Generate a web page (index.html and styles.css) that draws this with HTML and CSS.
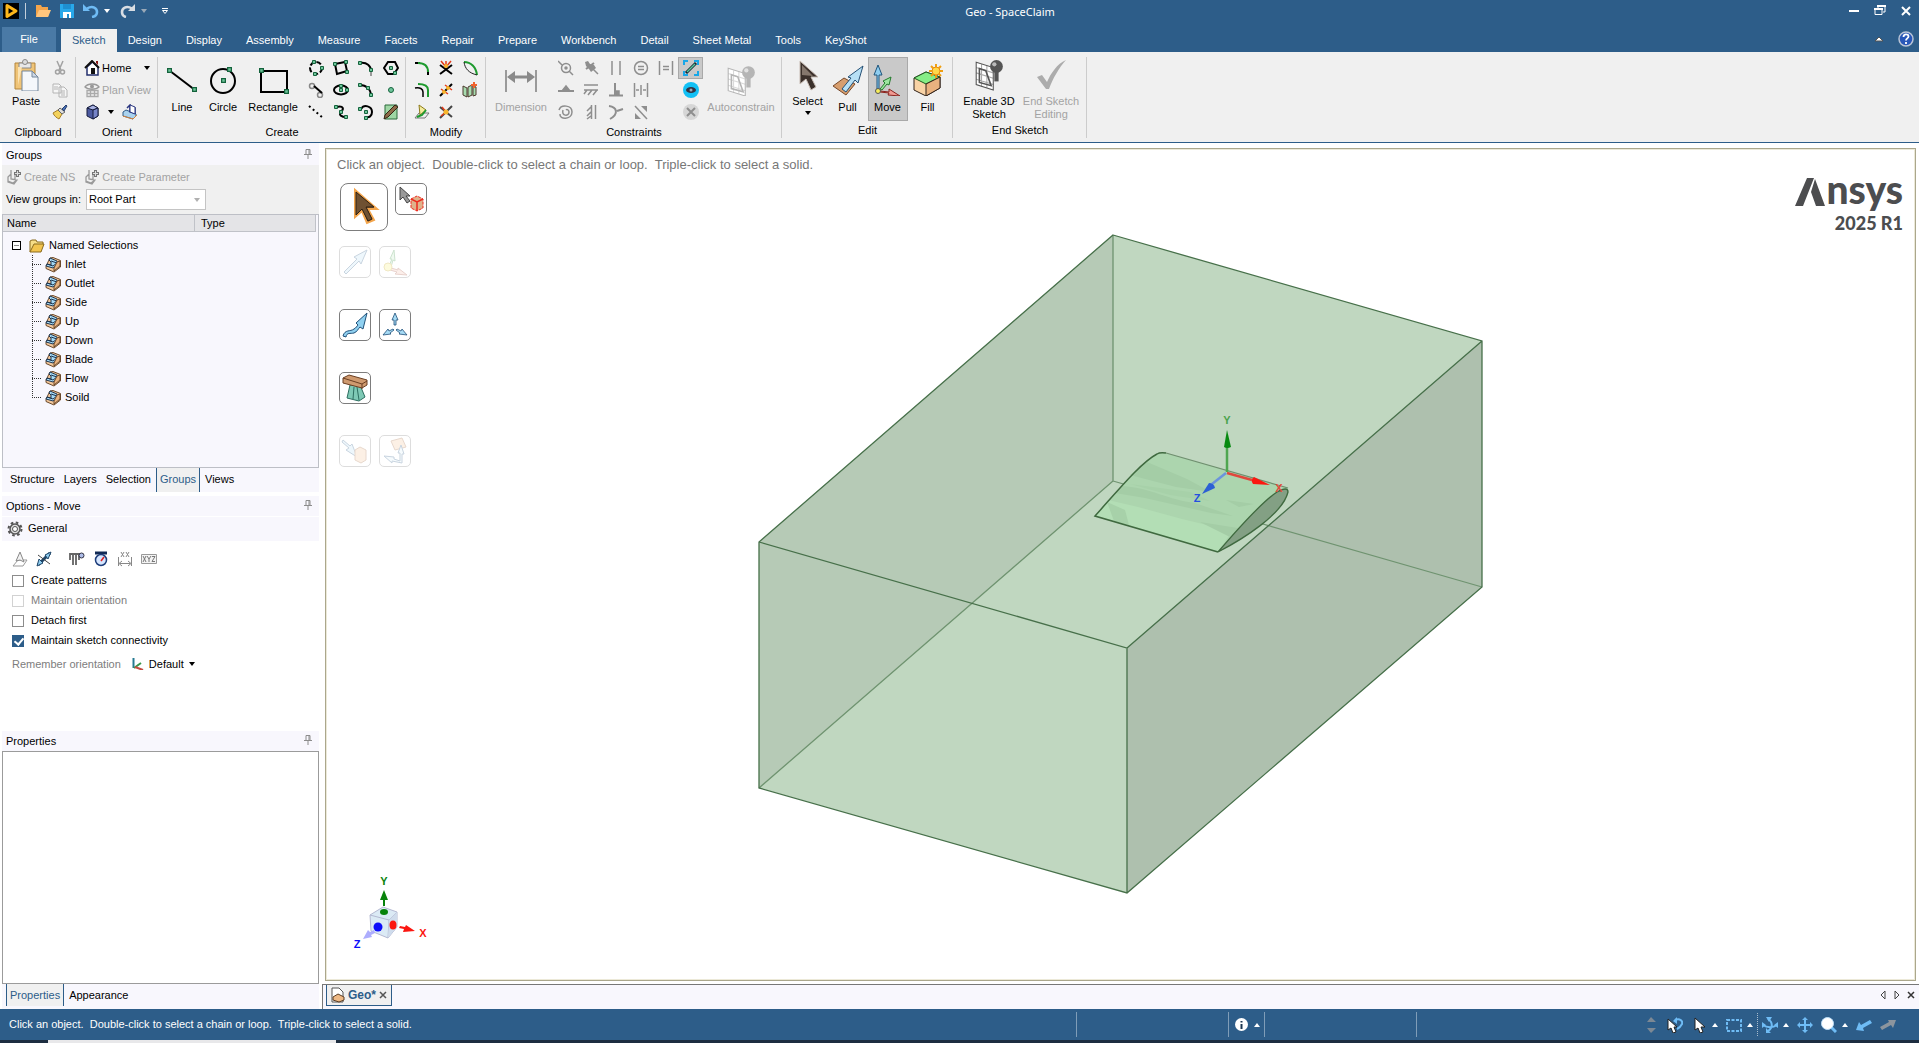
FILE: index.html
```html
<!DOCTYPE html>
<html lang="en">
<head>
<meta charset="utf-8">
<title>Geo - SpaceClaim</title>
<meta name="viewport" content="width=device-width, initial-scale=1">
<link rel="stylesheet" href="styles.css">
</head>
<body>
<svg class="defs" aria-hidden="true">
  <symbol id="down" viewBox="0 0 6 6"><path d="M0 1h6L3 5z" fill="currentColor"/></symbol>
  <symbol id="up" viewBox="0 0 6 6"><path d="M0 5h6L3 1z" fill="currentColor"/></symbol>
  <symbol id="pin" viewBox="0 0 8 10"><path d="M2 .5h4v5H2zM0 5.500h8M4 6v4M5 1v4" fill="none" stroke="#8c8c8c"/></symbol>
  <symbol id="h" viewBox="0 0 4 4"><path d="M.5 .5h3v3h-3z" fill="#6fc59b" stroke="#14633c"/></symbol>
  <symbol id="face" viewBox="0 0 16 16"><path d="M1 9l4-8 3-.5 7.500 3v6.500L9 15 1 11.500z" fill="#f4c79a" stroke="#6b4a2c"/><path d="M5 1l7 3v4l-4 3-7-2 1-2 4 1V5L4 3z" fill="#a6daf5" stroke="#1d3550"/><path d="M6 4l6 2M2 7l6 2 4-3" fill="none" stroke="#1d3550"/><path d="M12 5l3-1v5l-6 5v-3z" fill="#e9b27f" stroke="#6b4a2c"/></symbol>
  <symbol id="ns" viewBox="0 0 16 16"><path d="M2 8l3-3v5l6 1-3 4-6-2zM5 1v6M9 5v6M2 12l5 2 4-3" fill="none" stroke="#9a9a9a" stroke-width="1.300"/><path d="M11.500 1v7M8 4.500h7" stroke="#777" stroke-width="3"/><path d="M11.500 2v5M9 4.500h5" stroke="#ddd"/></symbol>
  <symbol id="bulb" viewBox="0 0 28 30"><path d="M2 3l16 5v21L2 24z" fill="#fff" stroke="currentColor"/><path d="M2 8l16 5M2 13l16 5M2 19l16 5M7 5v21M12 6v21" stroke="currentColor" opacity=".5"/><path d="M5 9l6 2 5 14-11-3z" fill="none" stroke="currentColor" stroke-width="1.500"/><circle cx="21" cy="7" r="6" fill="currentColor"/><circle cx="19" cy="5" r="2" fill="#fff" opacity=".6"/><path d="M19 12h4v9h-4z" fill="currentColor"/></symbol>
</svg>

<header class="top">
  <div class="titlebar">
    <div class="quick">
      <svg class="q-logo" width="16" height="16" viewBox="0 0 16 16"><path fill="#000" d="M0 0h16v16H0z"/><path d="M4 2.500L13 8l-9 5.500z" fill="none" stroke="#fdb71a" stroke-width="3" stroke-linejoin="round"/></svg>
      <span class="q-sep"></span>
      <button aria-label="Open"><svg width="16" height="14" viewBox="0 0 16 14"><path d="M1 13V1h5l1 2h6v3h2l-2 7z" fill="#f3a54c"/><path d="M4 6h12l-3 7H1z" fill="#ffc57d"/></svg></button>
      <button aria-label="Save"><svg width="14" height="14" viewBox="0 0 14 14"><path d="M0 0h14v14H0z" fill="#28a8ea"/><path d="M3 8h8v6H3z" fill="#fff"/><path d="M7 10h2v4H7zM3 0h8v5H3z" fill="#1e8fd0"/></svg></button>
      <button aria-label="Undo"><svg width="16" height="14" viewBox="0 0 16 14"><path d="M4 4.500c6-3.500 10 0 10 3.500 0 3-2 4.500-5 5" fill="none" stroke="#6fbcf5" stroke-width="2.600"/><path d="M0 7V0l7 7z" fill="#6fbcf5"/></svg></button>
      <svg class="tri" width="6" height="6"><use href="#down"/></svg>
      <button aria-label="Redo"><svg width="16" height="14" viewBox="0 0 16 14"><path d="M12 4.500c-6-3.500-10 0-10 3.500 0 3 2 4.500 4 5" fill="none" stroke="#d8dde3" stroke-width="2.600"/><path d="M15 7V0L8 7z" fill="#d8dde3"/></svg></button>
      <svg class="tri dim" width="6" height="6"><use href="#down"/></svg>
      <button class="customize" aria-label="Customize"><svg width="6" height="7" viewBox="0 0 6 7"><path d="M0 .5h6" stroke="#fff"/><path d="M.5 2.500h5L3 5.500z" fill="none" stroke="#fff"/></svg></button>
    </div>
    <h1>Geo - SpaceClaim</h1>
    <div class="window">
      <button aria-label="Minimize"><svg width="12" height="12"><path d="M1 6h10" stroke="#fff" stroke-width="2"/></svg></button>
      <button aria-label="Restore"><svg width="12" height="12"><path d="M4 4V1h7v6H9" fill="none" stroke="#fff"/><path d="M1 4.500h7v5H1z" fill="none" stroke="#fff"/><path d="M0 4h9M3 1h9" stroke="#fff" stroke-width="2"/></svg></button>
      <button aria-label="Close"><svg width="12" height="12"><path d="M2 2l8 8M10 2l-8 8" stroke="#fff" stroke-width="2"/></svg></button>
    </div>
  </div>
  <nav class="tabs">
    <button class="file">File</button>
    <button class="on">Sketch</button>
    <button>Design</button><button>Display</button><button>Assembly</button><button>Measure</button><button>Facets</button><button>Repair</button><button>Prepare</button><button>Workbench</button><button>Detail</button><button>Sheet Metal</button><button>Tools</button><button>KeyShot</button>
    <span class="grow"></span>
    <button class="plain" aria-label="Collapse ribbon"><svg width="10" height="6"><path d="M1 5l4-4 4 4z" fill="#fff" stroke="#555"/></svg></button>
    <button class="plain help" aria-label="Help"><svg width="16" height="16"><circle cx="8" cy="8" r="7" fill="#2857b8" stroke="#b9c4d6" stroke-width="1.500"/><path d="M5.500 6c0-3.500 5-3.500 5-.5 0 2-2.500 1.800-2.500 4M8 11v2" fill="none" stroke="#fff" stroke-width="1.800"/></svg></button>
  </nav>
</header>

<section class="ribbon" aria-label="Sketch tools">
  <div class="group clipboard">
    <div class="body">
      <button class="big high"><svg width="32" height="32" viewBox="0 0 32 32"><path d="M5 4h20v26H5z" fill="#f0c477" stroke="#b3853c"/><path d="M9 4h12v5H9z" fill="#e8e8e8" stroke="#888"/><circle cx="15" cy="3" r="2.500" fill="#ddd" stroke="#888"/><path d="M8 8h4l-4 18z" fill="#fbe3b3"/><path d="M12 12h10l6 6v14H12z" fill="#f4f7fb" stroke="#75879c"/><path d="M22 12v6h6z" fill="#cfd9e6" stroke="#75879c"/></svg>Paste</button>
      <div class="icons c1">
        <button aria-label="Cut"><svg width="16" height="16"><path d="M5 1l4 9M11 1L7 10" stroke="#a2a2a2" stroke-width="1.500"/><circle cx="5.500" cy="12" r="2" fill="none" stroke="#a2a2a2" stroke-width="1.500"/><circle cx="10.500" cy="12" r="2" fill="none" stroke="#a2a2a2" stroke-width="1.500"/></svg></button>
        <button aria-label="Copy"><svg width="16" height="16"><path d="M1 2h6l2 2v7H1zM7 5h5l3 3v7H7zM2 5h4M2 7h4M9 9h4M9 11h4M9 13h4" fill="#f6f6f6" stroke="#b4b4b4"/></svg></button>
        <button aria-label="Format painter"><svg width="16" height="16"><path d="M1 9l5-3 4 4-3 5c-2-1-5-3-6-6z" fill="#f3d25c" stroke="#a67d27"/><path d="M6 6l2-2 5 4-3 2z" fill="#ddd" stroke="#666"/><path d="M10 5l4-4 1 1-3 5z" fill="#476fb5" stroke="#28406e"/></svg></button>
      </div>
    </div>
    <h2>Clipboard</h2>
  </div>
  <div class="group orient">
    <div class="body rows">
      <div class="row"><button class="inline"><svg width="16" height="16"><path d="M3 7v8h11V7L8.500 2z" fill="#fff" stroke="#24306e" stroke-width="1.500"/><path d="M1 8l7-7 7 7" fill="none" stroke="#111" stroke-width="2"/><path d="M12 1h2v4l-2-2z" fill="#8a1a1a"/><path d="M7 8h4v6H7z" fill="#111"/></svg>Home</button><svg class="tri dark far" width="6" height="6"><use href="#down"/></svg></div>
      <div class="row"><button class="inline off"><svg width="16" height="16"><path d="M1 5c3-4 11-4 14 0-3 3-11 3-14 0z" fill="none" stroke="#999" stroke-width="1.300"/><circle cx="8" cy="4.500" r="2" fill="#999"/><path d="M3 8.500h11v6H3zM3 11.500h11M6.500 8v7M10.500 8v7" fill="none" stroke="#aaa" stroke-width="1.300"/></svg>Plan View</button></div>
      <div class="row"><button class="inline" aria-label="View cube"><svg width="16" height="16"><path d="M3 4l6-3 5 3v8l-5 3-6-3z" fill="#4c5aa0" stroke="#161c3d"/><path d="M3 4l6-3 5 3-5 2z" fill="#a8b2e2" stroke="#161c3d"/><path d="M9 6l5-2v8l-5 3z" fill="#7684c8" stroke="#161c3d"/></svg></button><svg class="tri dark" width="6" height="6"><use href="#down"/></svg><button class="inline spin" aria-label="Previous view"><svg width="16" height="16"><path d="M1 8l3-2 10 4v2l-3 3-10-3z" fill="#a9d2ee" stroke="#2c5a86"/><path d="M1 12l10 3 4-4" fill="none" stroke="#d8833a"/><path d="M5 4l3-3v7l5 1V4h-3" fill="none" stroke="#2b3780" stroke-width="1.500"/><path d="M8 1l5 2v7l-5-2z" fill="#fff" stroke="#2b3780"/></svg></button></div>
    </div>
    <h2>Orient</h2>
  </div>
  <div class="group create">
    <div class="body">
      <button class="big line"><svg width="32" height="32" viewBox="0 0 32 32"><path d="M4 7l25 19" stroke="#000" stroke-width="2"/><use href="#h" x="1" y="4" width="5" height="5"/><use href="#h" x="26" y="23" width="5" height="5"/></svg>Line</button>
      <button class="big"><svg width="32" height="32" viewBox="0 0 32 32"><circle cx="16" cy="17" r="12" fill="none" stroke="#000" stroke-width="2"/><use href="#h" x="14" y="14" width="5" height="5"/><use href="#h" x="20" y="3" width="5" height="5"/></svg>Circle</button>
      <button class="big rect"><svg width="32" height="32" viewBox="0 0 32 32"><path d="M4 7h26v21H4z" fill="none" stroke="#000" stroke-width="2"/><use href="#h" x="2" y="4" width="5" height="5"/><use href="#h" x="27" y="25" width="5" height="5"/></svg>Rectangle</button>
      <div class="icons c4">
        <button aria-label="Three-point circle"><svg width="16" height="16"><circle cx="8" cy="8" r="6" fill="none" stroke="#000" stroke-width="2" stroke-dasharray="5 2"/><use href="#h" x="4" width="4" height="4"/><use href="#h" x="12" y="6" width="4" height="4"/><use href="#h" x="5" y="12" width="4" height="4"/></svg></button>
        <button aria-label="Three-point rectangle"><svg width="16" height="16"><path d="M2 4l10-2 2 9-10 3z" fill="none" stroke="#000" stroke-width="2"/><use href="#h" y="2" width="4" height="4"/><use href="#h" x="11" y="0" width="4" height="4"/><use href="#h" x="12" y="10" width="4" height="4"/></svg></button>
        <button aria-label="Tangent arc"><svg width="16" height="16"><path d="M2 3c7-1 11 3 11 8" fill="none" stroke="#000" stroke-width="2"/><path d="M13 9v7" stroke="#999" stroke-width="2"/><use href="#h" y="1" width="4" height="4"/><use href="#h" x="11" y="8" width="4" height="4"/></svg></button>
        <button aria-label="Polygon"><svg width="16" height="16"><path d="M5 2h7l3 6-4 6H5L1 8z" fill="none" stroke="#000" stroke-width="2"/><use href="#h" x="6" y="6" width="4" height="4"/><use href="#h" x="10" y="11" width="4" height="4"/></svg></button>
        <button aria-label="Tangent line"><svg width="16" height="16"><circle cx="4" cy="4" r="2.500" fill="none" stroke="#888" stroke-width="1.500"/><circle cx="12" cy="13" r="2.500" fill="none" stroke="#888" stroke-width="1.500"/><path d="M6 4l8 7" stroke="#000" stroke-width="2"/></svg></button>
        <button aria-label="Ellipse"><svg width="16" height="16"><ellipse cx="8" cy="8" rx="7" ry="4.500" fill="none" stroke="#000" stroke-width="2"/><use href="#h" x="6" y="6" width="4" height="4"/><use href="#h" x="6" y="2" width="4" height="4"/><use href="#h" x="12" y="6" width="4" height="4"/></svg></button>
        <button aria-label="Three-point arc"><svg width="16" height="16"><path d="M2 3c6 0 11 4 11 11" fill="none" stroke="#000" stroke-width="2"/><use href="#h" y="1" width="4" height="4"/><use href="#h" x="8" y="4" width="4" height="4"/><use href="#h" x="11" y="11" width="4" height="4"/></svg></button>
        <button aria-label="Point"><svg width="16" height="16"><circle cx="8" cy="8" r="2.500" fill="#6fc59b" stroke="#14633c"/></svg></button>
        <button aria-label="Construction line"><svg width="16" height="16"><path d="M1 2l14 12" stroke="#000" stroke-width="2" stroke-dasharray="2 3"/></svg></button>
        <button aria-label="Spline"><svg width="16" height="16"><path d="M3 3c8-2 8 2 5 5s1 5 5 5" fill="none" stroke="#000" stroke-width="2"/><use href="#h" x="1" y="1" width="4" height="4"/><use href="#h" x="6" y="6" width="4" height="4"/><use href="#h" x="11" y="11" width="4" height="4"/></svg></button>
        <button aria-label="Sweep arc"><svg width="16" height="16"><path d="M3 5c3-5 11-3 11 3 0 4-3 6-6 5" fill="none" stroke="#000" stroke-width="2"/><use href="#h" x="0" y="3" width="4" height="4"/><use href="#h" x="6" y="6" width="4" height="4"/><use href="#h" x="6" y="12" width="4" height="4"/></svg></button>
        <button aria-label="Face curve"><svg width="16" height="16"><path d="M2 1h12v14H2z" fill="#9fd6a4" stroke="#2a6b3a"/><path d="M1 15l1-4L12 1l3 2L5 13z" fill="#8d6a48" stroke="#352315"/></svg></button>
      </div>
    </div>
    <h2>Create</h2>
  </div>
  <div class="group modify">
    <div class="body">
      <div class="icons c3">
        <button aria-label="Rounded corner"><svg width="16" height="16"><path d="M1 3h5M14 11v4" stroke="#000" stroke-width="2"/><path d="M4 3c6 0 10 3 10 9" fill="none" stroke="#1d9a2e" stroke-width="2"/></svg></button>
        <button aria-label="Trim away"><svg width="16" height="16"><path d="M2 14l12-9M2 5l12 9" stroke="#000" stroke-width="2"/><path d="M3 1l5 6 5-6M8 6V1" stroke="#e43b19" stroke-width="1.500" fill="none"/><circle cx="8" cy="6" r="2" fill="#f8b52c"/></svg></button>
        <button aria-label="Split curve"><svg width="16" height="16"><path d="M2 2c7 0 12 5 13 13" fill="none" stroke="#1d9a2e" stroke-width="2"/><path d="M2 2c1 7 5 11 13 13" fill="none" stroke="#222"/></svg></button>
        <button aria-label="Offset curve"><svg width="16" height="16"><path d="M4 2c7 0 10 2 10 6v7" fill="none" stroke="#1d9a2e" stroke-width="2"/><path d="M1 6c5-1 8 1 8 4v5" fill="none" stroke="#000" stroke-width="1.500"/></svg></button>
        <button aria-label="Split"><svg width="16" height="16"><path d="M2 14L14 2" stroke="#000" stroke-width="2"/><path d="M3 7l7 5M7 3l7 5" stroke="#e43b19" stroke-width="1.500"/><circle cx="6" cy="10" r="2" fill="#f8b52c"/><circle cx="10" cy="6" r="2" fill="#f8b52c"/></svg></button>
        <button aria-label="Project"><svg width="16" height="16"><path d="M1 4l4 2v9l-4-2zM6 5l4-2v10l-4 2zM11 4l3 1v8l-3 1z" fill="#a7dcb0" stroke="#4c3a2c"/><path d="M12 0v6M9 3h6" stroke="#f0622d" stroke-width="2"/></svg></button>
        <button aria-label="Create corner"><svg width="16" height="16"><path d="M1 14l4-5h10l-4 5z" fill="#eee" stroke="#777"/><path d="M5 1l7 5-6 5z" fill="#f3ec9b" stroke="#8d7a1a"/><path d="M3 13l5-2 4-5" fill="none" stroke="#1d9a2e" stroke-width="2"/></svg></button>
        <button aria-label="Bend"><svg width="16" height="16"><path d="M2 3l12 10M2 14L14 2" stroke="#444" stroke-width="2"/><path d="M4 3l4 5-5 4" stroke="#e43b19" stroke-width="1.500" fill="none"/><circle cx="8" cy="8" r="2.500" fill="#f8b52c"/></svg></button>
      </div>
    </div>
    <h2>Modify</h2>
  </div>
  <div class="group constraints">
    <div class="body">
      <button class="big off dim"><svg width="32" height="32" viewBox="0 0 32 32"><path d="M1 6v22M31 6v22" stroke="#9a9a9a" stroke-width="2"/><path d="M5 13h22" stroke="#8a8a8a" stroke-width="3"/><path d="M2 13l8-6v12zM30 13l-8-6v12z" fill="#8a8a8a"/></svg>Dimension</button>
      <div class="icons c6 grey">
        <button aria-label="Coincident"><svg width="16" height="16"><path d="M0 1l4 4M11 11l4 4" /><circle cx="8" cy="8" r="4.500"/><circle cx="8" cy="8" r="1" fill="#8e8e8e"/></svg></button>
        <button aria-label="Fix"><svg width="16" height="16"><path d="M9 8l6 6"/><path d="M2 2l3-1 2 3 4 1 2 3-5 4-2-3-3-3z" fill="#8e8e8e" stroke="none"/><path d="M3 9l8-6" stroke-width="2"/></svg></button>
        <button aria-label="Parallel"><svg width="16" height="16"><path d="M4 1v14M12 1v14"/></svg></button>
        <button aria-label="Equal radius"><svg width="16" height="16"><circle cx="8" cy="8" r="6.500"/><path d="M5 6.500h6M5 9.500h6"/></svg></button>
        <button aria-label="Equal distance"><svg width="16" height="16"><path d="M1.500 1v14M14.500 1v14M5 6.500h6M5 9.500h6"/></svg></button>
        <button class="pressed" aria-label="Scale view"><svg width="16" height="16"><g stroke="#18a7e8" stroke-width="2"><path d="M1 5V1h4M11 1h4v4M15 11v4h-4M5 15H1v-4"/></g><path d="M3 13L13 3" stroke="#123" stroke-width="3"/><path d="M4 12l8-8" stroke="#59c79b"/></svg></button>
        <button aria-label="Midpoint"><svg width="16" height="16"><path d="M0 9h16" stroke-width="2"/><path d="M4 9l4-5 4 5z" fill="#8e8e8e"/></svg></button>
        <button aria-label="Horizontal"><svg width="16" height="16"><path d="M1 3h14M1 8h14M4 8l-3 4M9 8l-4 5M14 8l-4 5" stroke-width="1.500"/></svg></button>
        <button aria-label="Perpendicular"><svg width="16" height="16"><path d="M1 13.500h14M7 1v13" stroke-width="2"/><path d="M8 9h3v4H8z" fill="#8e8e8e"/></svg></button>
        <button aria-label="Symmetric"><svg width="16" height="16"><path d="M1.500 1v14M14.500 1v14M8 3v10M3 8h3M10 8h3"/></svg></button>
        <span></span>
        <button aria-label="Show constraints"><svg width="16" height="16"><circle cx="8" cy="8" r="8" fill="#12c0f5" stroke="none"/><ellipse cx="8" cy="8" rx="5" ry="3" fill="#334" stroke="none"/><circle cx="8" cy="8" r="1.500" fill="#9ab" stroke="none"/></svg></button>
        <button aria-label="Concentric"><svg width="16" height="16"><path d="M1 6c2-6 13-5 13 2 0 8-13 8-12 2M5 6c-2 6 6 7 6 2 0-2-2-3-3-2"/></svg></button>
        <button aria-label="Vertical"><svg width="16" height="16"><path d="M8.500 1v14M12.500 1v14M8 3L4 7M8 8l-4 4M8 12l-4 3"/></svg></button>
        <button aria-label="Tangent"><svg width="16" height="16"><path d="M1 2c8 1 10 8 1 13M9 7l6-2" stroke-width="2"/></svg></button>
        <button aria-label="Skew"><svg width="16" height="16"><path d="M2 2l12 13"/><path d="M8 2h6v6zM2 9v6h6z" fill="#8e8e8e" stroke="none"/></svg></button>
        <span></span>
        <button aria-label="Delete constraints"><svg width="16" height="16"><circle cx="8" cy="8" r="8" fill="#d6d6d6" stroke="none"/><path d="M4 4l8 8M12 4l-8 8" stroke-width="2"/></svg></button>
      </div>
      <button class="big off auto"><svg width="32" height="32" viewBox="0 -1 28 30" class="fade"><use href="#bulb" width="28" height="30"/></svg>Autoconstrain</button>
    </div>
    <h2>Constraints</h2>
  </div>
  <div class="group edit">
    <div class="body">
      <button class="big high"><svg width="32" height="32" viewBox="0 0 32 32"><path d="M8 2v23l6-5 5 11 5-3-5-10h7z" fill="#3b302b" stroke="#c9bdb4"/><path d="M10 6v10l11 1z" fill="#85776d"/></svg>Select<svg class="tri dark" width="6" height="6"><use href="#down"/></svg></button>
      <button class="big"><svg width="32" height="32" viewBox="0 0 32 32"><path d="M1 22l11-8 11 6-9 11z" fill="#d79e6e" stroke="#77492a"/><path d="M10 25l9-11-3-1L31 2l-5 17-3-3-9 12z" fill="#b7e0f5" stroke="#255075"/></svg>Pull</button>
      <button class="big pressed"><svg width="32" height="32" viewBox="0 0 32 32"><path d="M5 26V11H2L6 1l4 10H7v15" fill="#8ecdf0" stroke="#1f557c"/><path d="M8 25l5-6-2-2 8-4-2 8-2-1-5 6z" fill="#9ee6a0" stroke="#237a2c"/><path d="M8 27l9 1v-3l11 7-12-1 1-2-9-1z" fill="#f09a92" stroke="#8a2520"/><circle cx="6" cy="27" r="2.500" fill="#f7ee5a" stroke="#555"/></svg>Move</button>
      <button class="big"><svg width="32" height="32" viewBox="0 0 32 32"><path d="M2 14l12-6 14 5v11l-14 8L2 26z" fill="#f8d3a6" stroke="#30221a"/><path d="M2 14l12-6 14 5-14 7z" fill="#86ed86" stroke="#1f5a1f"/><path d="M14 20v12l14-8V13z" fill="#e9b27f" stroke="#30221a"/><path d="M24 0v14M17 7h14M19 2l10 10M29 2L19 12" stroke="#f0a012" stroke-width="2"/><circle cx="24" cy="7" r="4" fill="#ffd84a" stroke="#e98a0f"/></svg>Fill</button>
    </div>
    <h2>Edit</h2>
  </div>
  <div class="group end">
    <div class="body">
      <button class="big high"><svg width="32" height="32" viewBox="0 0 28 30" class="ink"><use href="#bulb" width="28" height="30"/></svg>Enable 3D<br>Sketch</button>
      <button class="big high off"><svg width="32" height="32" viewBox="0 0 32 32"><path d="M2 18l5-2 5 7C16 14 22 5 31 1c-7 8-13 18-17 29h-3z" fill="#acacac"/></svg>End Sketch<br>Editing</button>
    </div>
    <h2>End Sketch</h2>
  </div>
</section>

<main class="work">
  <aside class="dock">
    <header class="cap groups-cap"><h2>Groups</h2><svg width="8" height="10"><use href="#pin"/></svg></header>
    <div class="gtools">
      <div class="grow-row"><button class="inline off" disabled><svg width="16" height="16"><use href="#ns"/></svg>Create NS</button><button class="inline off" disabled><svg width="16" height="16"><use href="#ns"/></svg>Create Parameter</button></div>
      <div class="view-row"><label for="viewin">View groups in:</label><span class="combo"><select id="viewin"><option>Root Part</option></select><svg width="6" height="6"><use href="#down"/></svg></span></div>
    </div>
    <div class="tree">
      <div class="thead"><span>Name</span><span>Type</span></div>
      <div class="root"><span class="minus"></span><svg width="16" height="14" viewBox="0 0 16 14"><path d="M1 13V2l2-1h4l1 2h6v3" fill="#f6dd87" stroke="#8a6a1c"/><path d="M1 13L5 5h10l-3 8z" fill="#f2c44e" stroke="#8a6a1c"/></svg>Named Selections</div>
      <ul>
        <li><svg width="16" height="16"><use href="#face"/></svg>Inlet</li>
        <li><svg width="16" height="16"><use href="#face"/></svg>Outlet</li>
        <li><svg width="16" height="16"><use href="#face"/></svg>Side</li>
        <li><svg width="16" height="16"><use href="#face"/></svg>Up</li>
        <li><svg width="16" height="16"><use href="#face"/></svg>Down</li>
        <li><svg width="16" height="16"><use href="#face"/></svg>Blade</li>
        <li><svg width="16" height="16"><use href="#face"/></svg>Flow</li>
        <li><svg width="16" height="16"><use href="#face"/></svg>Soild</li>
      </ul>
    </div>
    <nav class="dtabs"><button>Structure</button><button>Layers</button><button>Selection</button><button class="on">Groups</button><button>Views</button></nav>
    <header class="cap options-cap"><h2>Options - Move</h2><svg width="8" height="10"><use href="#pin"/></svg></header>
    <div class="general"><svg width="16" height="16"><circle cx="8" cy="8" r="6.500" fill="none" stroke="#555" stroke-width="2" stroke-dasharray="2.600 2.500"/><circle cx="8" cy="8" r="5" fill="#ddd" stroke="#555" stroke-width="1.500"/><circle cx="8" cy="8" r="2.500" fill="#fff" stroke="#555"/></svg>General</div>
    <div class="options">
      <div class="otools">
        <button aria-label="Move to plane"><svg width="16" height="16"><path d="M1 15l5-6h9l-4 6z" fill="none" stroke="#9a9a9a"/><path d="M4 10l4-9 4 10-4-2z" fill="#f2f2f2" stroke="#888"/></svg></button>
        <button aria-label="Move along direction"><svg width="16" height="16"><path d="M2 14L14 2" stroke="#1f4669" stroke-width="3"/><path d="M15 1L9 4l3 4zM1 15l2-7 4 4z" fill="#8ecdf0" stroke="#1f4669"/><path d="M2 4l12 9" stroke="#444"/></svg></button>
        <button class="cal" aria-label="Ruler"><svg width="16" height="16"><path d="M1 2v7M4 2v12M7 2v12M10 2v7" stroke="#444" stroke-width="1.500"/><path d="M1 3h10" stroke="#666" stroke-width="2"/><circle cx="12.500" cy="4.500" r="2.500" fill="#aebde8" stroke="#334"/></svg></button>
        <button aria-label="Dial"><svg width="16" height="16"><path d="M2 2h12" stroke="#112a55" stroke-width="3"/><circle cx="8" cy="9" r="5.500" fill="#d6e6ff" stroke="#1d3d7a" stroke-width="1.500"/><path d="M8 10l3-4" stroke="#d22" stroke-width="1.500"/></svg></button>
        <button aria-label="Dimension entry"><svg width="16" height="16"><path d="M1.500 6v9M14.500 6v9M3 12.500h10M5 10l-3 2.500L5 15M11 10l3 2.500-3 2.500M4 1l3 5M7 1L4 6M9 1l3 5M12 1L9 6" fill="none" stroke="#888"/></svg></button>
        <button aria-label="Coordinates"><svg width="16" height="16"><path d="M.5 3.500h15v9H.5z" fill="#f4f4f4" stroke="#999"/><path d="M2 5l3 6M5 5l-3 6M6 5l2 3v3M10 5L8 8M11 5.500h3l-3 5h3" fill="none" stroke="#777"/></svg></button>
      </div>
      <label><input type="checkbox">Create patterns</label>
      <label class="disabled"><input type="checkbox" disabled>Maintain orientation</label>
      <label><input type="checkbox">Detach first</label>
      <label><input type="checkbox" checked>Maintain sketch connectivity</label>
      <div class="remember"><span>Remember orientation</span><button class="inline"><svg width="12" height="12"><path d="M1.500 0v10" stroke="#267a92" stroke-width="2"/><path d="M2 10l7-5" stroke="#37964b" stroke-width="2"/><path d="M3 9l8 3" stroke="#c64b42" stroke-width="2"/></svg>Default<svg class="tri dark" width="6" height="6"><use href="#down"/></svg></button></div>
    </div>
    <header class="cap"><h2>Properties</h2><svg width="8" height="10"><use href="#pin"/></svg></header>
    <div class="props"></div>
    <nav class="dtabs bottom"><button class="on">Properties</button><button>Appearance</button></nav>
  </aside>

  <section class="stage">
    <div class="viewport">
      <svg class="scene" viewBox="327 150 1587 829" role="img" aria-label="Flow box around a blade">
        <path d="M1113 235L1482 341V587L1127 893 759 788V542z" fill="#c0d7c0"/>
        <path d="M1113 235L759 542v246l354-307z" fill="#b6cab6"/>
        <path d="M1482 341L1127 648v245l355-306z" fill="#aec0ae"/>
        <path d="M1113 235v246L759 788M1113 481l369 106" fill="none" stroke="#6f9370" stroke-width="1.300"/>
        <path d="M1095 516C1115 494 1140 463 1157 454Q1160 452 1166 453L1286 487Q1290 489 1287 496C1278 516 1240 540 1218 552z" fill="#acd5ae"/>
        <path d="M1108 500l30 7 44 12 50 12-14 21-123-36z" fill="#b3deb5"/>
        <path d="M1122 486c30 2 46 14 73 17l38 13-22-3-66-15-30-5zM1147 462l40 17 24 13-35-5-46-12zM1200 522l44 7-12 9zM1226 500l28 4-15 3z" fill="#a4cda6"/>
        <path d="M1107 502l18 8 4 15-15-4zM1130 484l60 8 20 9-40-6z" fill="#a7d1a9"/>
        <path d="M1218 552C1236 531 1262 502 1277 492Q1288 486 1288 492C1283 514 1243 539 1218 552z" fill="#83a084"/>
        <path d="M1218 552L1095 516C1115 494 1140 463 1157 454Q1160 452 1166 453" fill="none" stroke="#3f693f" stroke-width="1.500"/>
        <path d="M1166 453L1288 488" fill="none" stroke="#6f8f6f" stroke-width="1.300"/>
        <path d="M1218 552C1236 531 1262 502 1277 492Q1288 486 1288 492C1283 514 1243 539 1218 552z" fill="none" stroke="#3f693f" stroke-width="1.300"/>
        <path d="M759 542l368 106 355-307M1127 648v245M1113 235L1482 341V587L1127 893 759 788V542z" fill="none" stroke="#47704a" stroke-width="1.300"/>
        <g stroke-width="2.500"><path d="M1227 472v-26" stroke="#4fa650"/><path d="M1227 473l25 7" stroke="#e0473c"/><path d="M1226 473l-14 11" stroke="#6b94dc"/></g>
        <path d="M1227 430l4 17q-4 2-7 0z" fill="#078a10"/><path d="M1270 485l-17-1q-3-4 1-7z" fill="#fb1810"/><path d="M1202 494l7-11q5 0 6 5z" fill="#2c60d4"/>
        <g class="axis"><text x="1227" y="424" fill="#4ba34d">Y</text><text x="1279" y="492" fill="#e34a3c">X</text><text x="1197" y="502" fill="#2450e0">Z</text></g>
        <path d="M370 915l13-8 14 5v15l-9 11-17-7z" fill="#dbeaf5" stroke="#b4b9d2"/><path d="M370 915l19 5 8-8M389 920l-1 18" fill="none" stroke="#b4b9d2"/><path d="M389 920l8-8v15l-9 11z" fill="#cfdcec"/>
        <ellipse cx="384" cy="912" rx="4" ry="3" fill="#08830b"/><circle cx="378" cy="927" r="4.500" fill="#0d0dfa"/><ellipse cx="393" cy="925" rx="3.500" ry="4.500" fill="#fb1610"/>
        <path d="M384 890l4 10h-3v6h-2v-6h-3z" fill="#08830b"/><path d="M415 931l-12 1 1-3-5-1 1-2 5 1 1-2z" fill="#fb1610"/><path d="M363 939l5-9 2 2 4-2 1 3-4 2 1 2z" fill="#adadfd"/>
        <g class="axis"><text x="384" y="885" fill="#08830b">Y</text><text x="423" y="937" fill="#fb1610">X</text><text x="357" y="948" fill="#0d0dfa">Z</text></g>
      </svg>
      <div class="hint">Click an object.&nbsp; Double-click to select a chain or loop.&nbsp; Triple-click to select a solid.</div>
      <div class="brand"><div class="ansys"><svg width="30" height="28" viewBox="0 0 30 28" aria-hidden="true"><path d="M0 28L12 0h7L8 28zM20 1l10 27h-9L16 14z" fill="#4c4d4f"/></svg><span>nsys</span></div><div class="release">2025 R1</div></div>
      <div class="guides">
        <div class="pair first">
          <button class="main" aria-label="Select"><svg width="36" height="40" viewBox="0 0 36 40"><path d="M9 3v27l7-6 5 12 7-3-6-11h9z" fill="#7b5836" stroke="#f3a54c" stroke-width="2"/><path d="M10 5v23l6-6 6 12 4-2-6-12h8z" fill="#6f5132" stroke="#2e2012"/></svg></button>
          <button aria-label="Select component"><svg width="28" height="28"><path d="M3 2v13l3-3 4 6 3-2-4-5h4z" fill="#999" stroke="#444"/><path d="M14 14l6-3 6 3v9l-6 3-6-3z" fill="#dfb28c" stroke="#ee2a1e" stroke-dasharray="3 1"/><path d="M14 14l6 3 6-3M20 17v9" fill="none" stroke="#ee2a1e" stroke-width="1.500"/></svg></button>
        </div>
        <div class="pair faint"><button disabled aria-label="Move direction"><svg width="28" height="28"><path d="M3 24L16 11l-3-2L26 2l-6 14-2-3L5 26z" fill="#bfe3f5" stroke="#2c5a86"/></svg></button><button disabled aria-label="Move origin"><svg width="28" height="28"><path d="M8 18l3-7H9l4-9 1 11-2-1-2 7z" fill="#c6efc8" stroke="#3a8f42"/><path d="M10 20l7 2v-2l9 7-12-1 2-2-7-2z" fill="#f5c0ae" stroke="#a8503c"/><circle cx="7" cy="19" r="4" fill="#fbf07a" stroke="#c6a51a"/></svg></button></div>
        <div class="pair"><button aria-label="Along trajectory"><svg width="28" height="28"><path d="M2 25c2-7 7-4 11-7 2-1 3-3 4-4l-2-2L26 2l-4 16-3-2c-2 2-3 5-6 6-4 1-7-1-8 4z" fill="#8fd0f0" stroke="#1f4f78"/></svg></button><button aria-label="Anchor axes"><svg width="28" height="28"><path d="M14 2l3 7h-2v5h-2V9h-2zM2 24l5-6 1 2 4-2 1 1-4 3 1 1zM26 24l-5-6-1 2-4-2-1 1 4 3-1 1z" fill="#a6dbf5" stroke="#1f4f78" stroke-width=".8"/></svg></button></div>
        <div class="pair"><button aria-label="Fulcrum"><svg width="28" height="28"><path d="M9 11h10l5 12-6 4-12-3z" fill="#7ec9b5" stroke="#2c6e60"/><path d="M13 13l-1 12M16 13l2 13" stroke="#2c6e60"/><path d="M2 4l6-3 18 5v5l-5 3L2 9z" fill="#cf9a6f" stroke="#6b3f22"/><path d="M2 4l19 6 5-3M21 10v5" fill="none" stroke="#6b3f22"/></svg></button></div>
        <div class="pair faint"><button disabled aria-label="Up to"><svg width="28" height="28"><path d="M2 3l7 6 2-2 5 13-11-7 3-2-7-6z" fill="#bfe3f5" stroke="#2c5a86"/><path d="M14 13l5-3 6 3v10l-5 3-6-3z" fill="#f4c79a" stroke="#a4673c"/></svg></button><button disabled aria-label="Orient to"><svg width="28" height="28"><path d="M10 4l11-3 4 9-11 3z" fill="#f4c79a" stroke="#a4673c"/><path d="M3 19l10 1v2l6 2V16h-2l3-8 3 9h-2v9l-10-2v2z" fill="#dff0f9" stroke="#2c5a86"/></svg></button></div>
      </div>
    </div>
    <div class="docs">
      <button class="doc"><svg width="14" height="16" viewBox="0 0 14 16"><path d="M1 1h7l4 4v10H1z" fill="#fff" stroke="#555"/><path d="M2 10l5-3 6 3v3l-5 2-6-2z" fill="#eeb985" stroke="#5c3c22"/></svg><b>Geo*</b><svg width="8" height="8"><path d="M1 1l6 6M7 1L1 7" stroke="#555" stroke-width="1.500"/></svg></button>
      <span class="grow"></span>
      <button aria-label="Previous"><svg width="8" height="10"><path d="M6 1v8L2 5z" fill="none" stroke="#444"/></svg></button>
      <button aria-label="Next"><svg width="8" height="10"><path d="M2 1v8l4-4z" fill="none" stroke="#444"/></svg></button>
      <button aria-label="Close document"><svg width="8" height="8"><path d="M1 1l6 6M7 1L1 7" stroke="#333" stroke-width="1.500"/></svg></button>
    </div>
  </section>
</main>

<footer class="status">
  <span class="message">Click an object.&nbsp; Double-click to select a chain or loop.&nbsp; Triple-click to select a solid.</span>
  <span class="cell wide"></span>
  <span class="cell info"><svg width="13" height="13"><circle cx="6.500" cy="6.500" r="6.500" fill="#fff"/><path d="M6.500 3v1.500M6.500 6v5" stroke="#1c3650" stroke-width="2"/></svg><svg width="6" height="6"><use href="#up"/></svg></span>
  <span class="cell wide"></span>
  <div class="cell tools">
    <svg width="16" height="16"><path d="M4 5h9L8 0zM4 11h9l-5 5z" fill="#7c8894"/></svg>
    <svg width="16" height="16"><path d="M8 3c5-2 8 1 7 4-1 2-3 4-5 5" fill="none" stroke="#6fbcf5" stroke-width="2"/><path d="M6 4l4-4v7z" fill="#6fbcf5"/><path d="M1 2v11l3-2 2 5 3-1-2-5h3z" fill="#fff" stroke="#222"/></svg>
    <span class="combo-icon"><svg width="16" height="16"><path d="M4 1v12l3-2 2 5 3-1-2-5h4z" fill="#fff" stroke="#222"/></svg><svg width="6" height="6"><use href="#up"/></svg></span>
    <span class="combo-icon"><svg width="16" height="16"><path d="M1 3h14v11H1z" fill="none" stroke="#6fbcf5" stroke-width="2" stroke-dasharray="3 1.500"/></svg><svg width="6" height="6"><use href="#up"/></svg></span>
    <span class="dots"></span>
    <span class="combo-icon"><svg width="16" height="16"><path d="M1 8c4 3 10 3 14 0M6 2c5 3 5 9 0 12" fill="none" stroke="#6fbcf5" stroke-width="2"/><path d="M16 11V5l-4 3zM4 0h6L7 5zM0 5v6l4-3zM4 11v5h5z" fill="#6fbcf5"/></svg><svg width="6" height="6"><use href="#up"/></svg></span>
    <svg width="16" height="16"><path d="M8 2v12M2 8h12" stroke="#6fbcf5" stroke-width="2"/><path d="M5 3h6L8 0zM5 13h6l-3 3zM3 5v6L0 8zM13 5v6l3-3z" fill="#6fbcf5"/></svg>
    <span class="combo-icon"><svg width="16" height="16"><path d="M10 10l5 5" stroke="#6fbcf5" stroke-width="3"/><circle cx="6.500" cy="6.500" r="6" fill="#fff" stroke="#bfe0fa"/></svg><svg width="6" height="6"><use href="#up"/></svg></span>
    <svg width="16" height="16"><path d="M0 13l3-8 2 3 9-5 2 3-9 5 1 3z" fill="#6fbcf5"/></svg>
    <svg width="16" height="16"><path d="M16 3l-3 8-2-3-9 5-2-3 9-5-1-2z" fill="#8c959e"/></svg>
  </div>
</footer>
<div class="taskbar"><span></span></div>
</body>
</html>
```
FILE: styles.css
```css
* { box-sizing: border-box; }
body {
  margin: 0;
  min-height: 100vh;
  display: flex;
  flex-direction: column;
  background: #fff;
  color: #000;
  font: 11px/13px "Liberation Sans", Arial, sans-serif;
  --blue: #2d5d89;
  --lav: #f8f7fd;
}
h1, h2 { margin: 0; font: inherit; }
button, select { font: inherit; color: inherit; }
button { border: 0; padding: 0; margin: 0; background: none; display: flex; align-items: center; justify-content: center; white-space: nowrap; }
svg { display: block; flex: none; }
.defs { display: none; }
.grow { flex: 1; }
.tri { color: #fff; }
.tri.dim { color: #9aa9b8; }
.tri.dark { color: #000; }

/* Title bar and ribbon tabs */
.top { background: var(--blue); color: #fff; }
.titlebar { display: flex; height: 26px; align-items: flex-start; }
.titlebar h1 { flex: 1; text-align: center; font: 11px/14px "Noto Sans", "Open Sans", sans-serif; padding-top: 5px; }
.quick { width: 179px; height: 22px; display: flex; align-items: center; gap: 9px; padding-left: 3px; }
.q-logo { margin-right: -3px; }
.q-sep { width: 1px; height: 16px; background: #c3cfdb; }
.quick .tri { margin: 0 1px 0 -4px; }
.customize { margin-left: 5px; }
.window { display: flex; }
.window button { width: 26px; height: 22px; }
.tabs { display: flex; align-items: flex-end; gap: 2px; height: 26px; padding: 0 5px 0 2px; }
.tabs button { padding: 0 11px; height: 23px; }
.tabs .file { width: 54px; height: 25px; margin-right: 3px; background: #4a7aa6; padding: 0; }
.tabs .on { background: #f0f0f0; color: var(--blue); margin-right: -2px; }
.tabs .plain { padding: 0; align-self: center; }
.tabs .help { margin: 0 0 0 12px; }

/* Ribbon */
.ribbon { display: flex; height: 91px; padding-top: 5px; background: #f0f0f0; border-bottom: 1px solid var(--blue); }
.group { display: flex; flex-direction: column; height: 81px; background: linear-gradient(#ccc, #ccc) right / 1px 100% no-repeat; }
.group h2 { text-align: center; line-height: 18px; }
.body { display: flex; height: 66px; justify-content: center; }
.clipboard { width: 76px; }
.orient { width: 82px; }
.create { width: 248px; }
.modify { width: 80px; }
.constraints { width: 296px; }
.edit { width: 171px; }
.end { width: 134px; }
.big { flex-direction: column; justify-content: flex-start; width: 40px; height: 64px; padding-top: 7px; gap: 0; line-height: 13px; }
.big > svg:first-child { margin-bottom: 5px; }
.big.high { padding-top: 2px; }
.big.high > svg:first-child { margin-bottom: 4px; }
.big .tri { margin-top: 2px; }
.big.line { width: 42px; }
.big.rect { width: 60px; }
.off { color: #a3a3a3; }
.pressed { background: #c9c9c9; box-shadow: inset 0 0 0 1px #a9a9a9; }
.big.dim { width: 64px; }
.big.auto { width: 76px; }
.fade { color: #b5b5b5; }
.ink { color: #555; }
.end .big { width: 62px; }
.icons { display: grid; grid-auto-rows: 22px; }
.c1 { grid-template-columns: 20px; margin-left: 4px; }
.c4 { grid-template-columns: repeat(4, 25px); }
.c3 { grid-template-columns: repeat(3, 24px); }
.c6 { grid-template-columns: repeat(6, 25px); }
.grey svg { fill: none; stroke: #8e8e8e; stroke-width: 1.500; }
.rows { flex-direction: column; padding-left: 8px; }
.row { display: flex; height: 22px; align-items: center; gap: 8px; }
.row .far { margin-left: 5px; }
.inline { gap: 2px; }

/* Left dock */
.work { flex: 1; display: flex; }
.dock { width: 317px; margin-left: 2px; display: flex; flex-direction: column; }
.cap { height: 20px; display: flex; justify-content: space-between; padding: 4px 7px 0 4px; background: var(--lav); }
.groups-cap { height: 22px; padding-top: 6px; }
.gtools { height: 49px; background: #f0f0f0; padding: 2px 0 0 4px; }
.grow-row { display: flex; gap: 9px; height: 20px; align-items: center; }
.view-row { display: flex; align-items: center; gap: 5px; height: 25px; }
.combo { display: flex; align-items: center; width: 120px; height: 21px; border: 1px solid #c4c4c4; background: #fff; padding-right: 5px; color: #b0b0b0; }
.combo select { flex: 1; appearance: none; border: 0; background: none; padding: 0 2px; color: #000; outline: 0; }
.tree { flex: 254 1 0; border: 1px solid #bdbfc6; background: var(--lav); }
.thead { display: grid; grid-template-columns: 192px 1fr; height: 17px; margin-right: 2px; background: #e4e4e7; border-bottom: 1px solid #c0c2c8; border-right: 1px solid #c0c2c8; }
.thead span { padding: 2px 0 0 4px; border-right: 1px solid #c0c2c8; }
.thead span + span { padding-left: 6px; border: 0; }
.root { display: flex; align-items: center; height: 19px; margin-top: 4px; padding-left: 9px; }
.root svg { margin: 0 4px 0 8px; }
.minus { width: 9px; height: 9px; border: 1px solid #000; background: linear-gradient(#8b8b8b, #8b8b8b) center / 5px 1px no-repeat #fff; }
.tree ul { list-style: none; margin: 0 0 0 29px; padding: 0; background: repeating-linear-gradient(#333 0 1px, transparent 1px 2px) 0 0 / 1px 143px no-repeat; }
.tree li { display: flex; align-items: center; gap: 4px; height: 19px; padding-left: 13px; background: repeating-linear-gradient(90deg, #333 0 1px, transparent 1px 2px) 0 9px / 10px 1px no-repeat; }
.dtabs { display: flex; gap: 1px; height: 24px; margin-bottom: 4px; background: var(--lav); padding-left: 4px; }
.dtabs button { padding: 0 4px; height: 24px; }
.dtabs .on { color: var(--blue); background: #f0f0f0; border: solid var(--blue); border-width: 0 1px; padding: 0 3px; }
.dtabs.bottom { height: 25px; margin: 0; }
.dtabs.bottom button { height: 22px; }
.options-cap { margin-bottom: 1px; }
.general { display: flex; align-items: center; gap: 5px; height: 24px; padding-left: 5px; background: var(--lav); }
.options { min-height: 190px; padding: 8px 0 0 10px; }
.otools { display: flex; gap: 8px; height: 20px; margin-bottom: 2px; align-items: center; }
.otools .cal { margin-left: 9px; }
.options label { display: flex; align-items: center; gap: 7px; height: 20px; }
.options label.disabled { color: #7d7d7d; }
.options input { appearance: none; width: 12px; height: 12px; margin: 0; border: 1px solid #8c8c8c; background: #fff; }
.options input:disabled { border-color: #d2d2d2; }
.options input:checked { border-color: var(--blue); background: var(--blue); }
.options input:checked::after { content: ""; display: block; width: 4px; height: 7px; margin: 0 0 0 3px; border: solid #fff; border-width: 0 2px 2px 0; transform: rotate(40deg); }
.remember { display: flex; gap: 11px; height: 27px; align-items: center; color: #7d7d7d; }
.remember button { color: #000; gap: 5px; }
.props { flex: 233 1 0; border: 1px solid #9b9b9b; }

/* Model view */
.stage { flex: 1; min-width: 0; display: flex; flex-direction: column; padding-left: 3px; }
.viewport { flex: 1; position: relative; margin: 5px 3px 3px; border: 1px solid #aba78c; box-shadow: inset 0 0 0 1px #ece9d8; padding: 9px 11px; }
.scene { position: absolute; inset: 1px; width: calc(100% - 2px); height: calc(100% - 2px); }
.axis { font: bold 11px "Liberation Sans", Arial, sans-serif; text-anchor: middle; }
.hint { position: relative; font-size: 13px; line-height: 14px; color: #777; }
.guides { position: relative; width: max-content; display: flex; flex-direction: column; gap: 31px; margin: 11px 0 0 2px; }
.pair { display: flex; gap: 8px; }
.pair.first { margin: 0 0 -16px 1px; gap: 7px; align-items: flex-start; }
.guides button { width: 32px; height: 32px; border: 1px solid #7d7d7d; border-radius: 5px; background: #fff; }
.guides .main { width: 48px; height: 48px; border-radius: 8px; }
.guides .faint button { opacity: .25; }
.brand { position: absolute; top: 29px; right: 12px; color: #4c4d4f; text-align: right; font-family: Lato, sans-serif; font-weight: 900; }
.ansys { display: flex; align-items: flex-end; justify-content: flex-end; gap: 1px; height: 28px; }
.ansys span { font-size: 39px; line-height: 28px; height: 31px; }
.release { margin-top: 7px; font-size: 18px; line-height: 20px; }
.docs { display: flex; align-items: center; height: 25px; border-top: 1px solid #777; border-left: 1px solid #777; background: var(--lav); padding: 0 4px 4px 3px; gap: 6px; }
.doc { align-self: flex-start; gap: 3px; height: 21px; padding: 0 4px; background: #f0f0f0; border: solid var(--blue); border-width: 0 1px 1px; color: var(--blue); font-size: 12px; }

/* Status bar */
.status { display: flex; height: 31px; align-items: center; background: var(--blue); color: #fff; padding-right: 23px; }
.message { flex: 1; padding-left: 9px; }
.cell { display: flex; align-items: center; height: 25px; border-left: 1px solid #7f9db8; }
.wide { width: 152px; }
.info { width: 36px; padding-left: 6px; gap: 6px; }
.tools { width: 480px; justify-content: flex-end; gap: 8px; }
.combo-icon { display: flex; align-items: center; gap: 5px; }
.dots { width: 1px; height: 24px; margin: 0 -4px; background: repeating-linear-gradient(#a9bccd 0 1px, transparent 1px 2px); }
.taskbar { height: 3px; background: #1d2d40; padding-left: 48px; }
.taskbar span { display: block; width: 288px; height: 3px; background: #e8e8ea; }
```
